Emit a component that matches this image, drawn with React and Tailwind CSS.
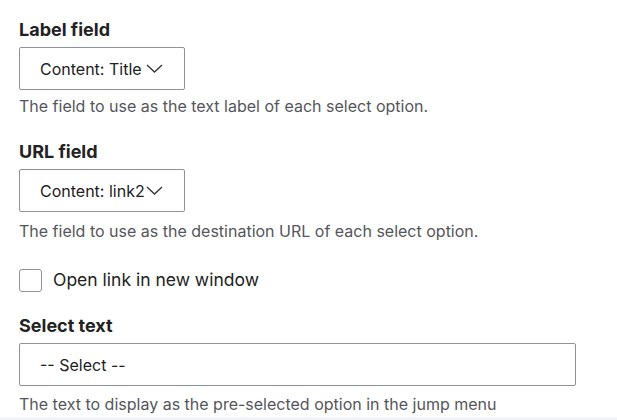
const Chevron = () => (
  <svg width="17" height="9" viewBox="0 0 17 9" fill="none" className="shrink-0">
    <path d="M1 1l7.5 7 7.5-7" stroke="#333" strokeWidth="1.3" />
  </svg>
);

const SelectBox = ({ children, wide }) => (
  <div
    className={
      "flex items-center h-[43px] border border-[#8e929c] rounded-[2px] bg-white text-[16px] text-[#222] " +
      (wide ? "w-[557px] pl-[20px]" : "w-[166px] pl-[20px] pr-[21px] justify-between")
    }
  >
    {children}
  </div>
);

const Help = ({ children, className }) => (
  <p className={"text-[16px] leading-[20px] text-[#55565b] " + (className || "")}>{children}</p>
);

const Label = ({ children, className }) => (
  <div className={"text-[18px] leading-[22px] font-bold text-[#222] mb-[6px] " + (className || "")}>
    {children}
  </div>
);

export default function App() {
  return (
    <div className="w-[617px] h-[420px] bg-white overflow-hidden flex flex-col" style={{ fontFamily: "Inter, 'Liberation Sans', sans-serif" }}>
      <div className="pl-[19px] pt-[19px] flex-1">
        <Label>Label field</Label>
        <SelectBox>
          <span>Content: Title</span>
          <Chevron />
        </SelectBox>
        <Help className="mt-[6px]">The field to use as the text label of each select option.</Help>

        <Label className="mt-[25px]">URL field</Label>
        <SelectBox>
          <span>Content: link2</span>
          <Chevron />
        </SelectBox>
        <Help className="mt-[9px]">The field to use as the destination URL of each select option.</Help>

        <label className="flex items-center mt-[26px]">
          <span className="w-[23px] h-[23px] border border-[#8e929c] rounded-[3px] bg-white"></span>
          <span className="ml-[11px] text-[17.5px] text-[#222]">Open link in new window</span>
        </label>

        <Label className="mt-[22px]">Select text</Label>
        <SelectBox wide>-- Select --</SelectBox>
        <Help className="mt-[8px]">The text to display as the pre-selected option in the jump menu</Help>
      </div>
      <div className="h-[3px] bg-[#f3f4f9]"></div>
    </div>
  );
}
